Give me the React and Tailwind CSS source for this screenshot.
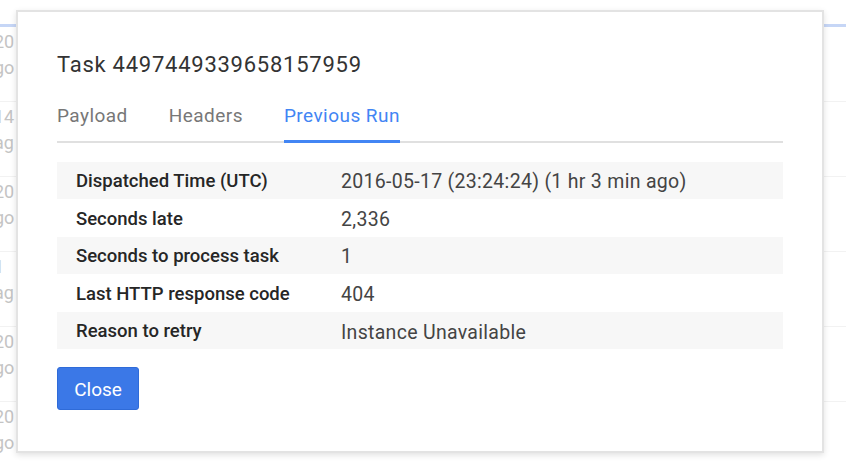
const rows = [
  ['Dispatched Time (UTC)', '2016-05-17 (23:24:24) (1 hr 3 min ago)'],
  ['Seconds late', '2,336'],
  ['Seconds to process task', '1'],
  ['Last HTTP response code', '404'],
  ['Reason to retry', 'Instance Unavailable'],
];

const behind = [
  ['20', 'go'],
  ['14', 'ag'],
  ['20', 'go'],
  ['1', 'ag'],
  ['20', 'go'],
  ['20', 'go'],
];

export default function App() {
  return (
    <div className="relative w-[846px] h-[471px] overflow-hidden bg-white" style={{ fontFamily: 'Roboto, "Open Sans", sans-serif' }}>
      {/* page behind the dialog */}
      <div className="h-[24px]" />
      <div className="h-[3px] bg-[#c6d6f6]" />
      <div className="flex flex-col text-[18px] leading-[26px] text-[#c4c4c4]">
        {behind.map(([a, b], i) => (
          <div key={i} className="h-[75px] pt-[2px] border-b border-[#f2f2f2] -ml-[6px]">
            <div>{a}</div>
            <div>{b}</div>
          </div>
        ))}
      </div>

      {/* dialog */}
      <div className="absolute left-[16px] top-[10px] w-[808px] h-[443px] bg-white border-2 border-[#e3e3e3] shadow-[0_2px_6px_rgba(0,0,0,0.12)] px-[39px] pt-[38px]">
        <h1 className="text-[22px] leading-[30px] tracking-[0.75px] text-[#333]">Task 4497449339658157959</h1>

        <div className="mt-[22px] flex border-b-2 border-[#e0e0e0] text-[19px] tracking-[0.45px]">
          <div className="pb-[10px] text-[#777] mr-[41px]">Payload</div>
          <div className="pb-[10px] text-[#777] mr-[41px]">Headers</div>
          <div className="pb-[8px] text-[#4285f4] border-b-[3px] border-[#4285f4] -mb-[2px]">Previous Run</div>
        </div>

        <div className="mt-[19px] flex flex-col">
          {rows.map(([k, v], i) => (
            <div key={k} className={`flex items-center h-[37.6px] pt-[3px] ${i % 2 === 0 ? 'bg-[#f7f7f7]' : 'bg-white'}`}>
              <div className="w-[284px] pl-[19px] text-[18.5px] font-medium text-[#262626]">{k}</div>
              <div className="text-[19.5px] tracking-[0.3px] text-[#444]">{v}</div>
            </div>
          ))}
        </div>

        <button className="mt-[18px] w-[82px] h-[43px] pt-[2px] rounded-[3px] bg-[#3b78e7] text-white text-[19px] border border-[#2f6bd8]">
          Close
        </button>
      </div>
    </div>
  );
}
